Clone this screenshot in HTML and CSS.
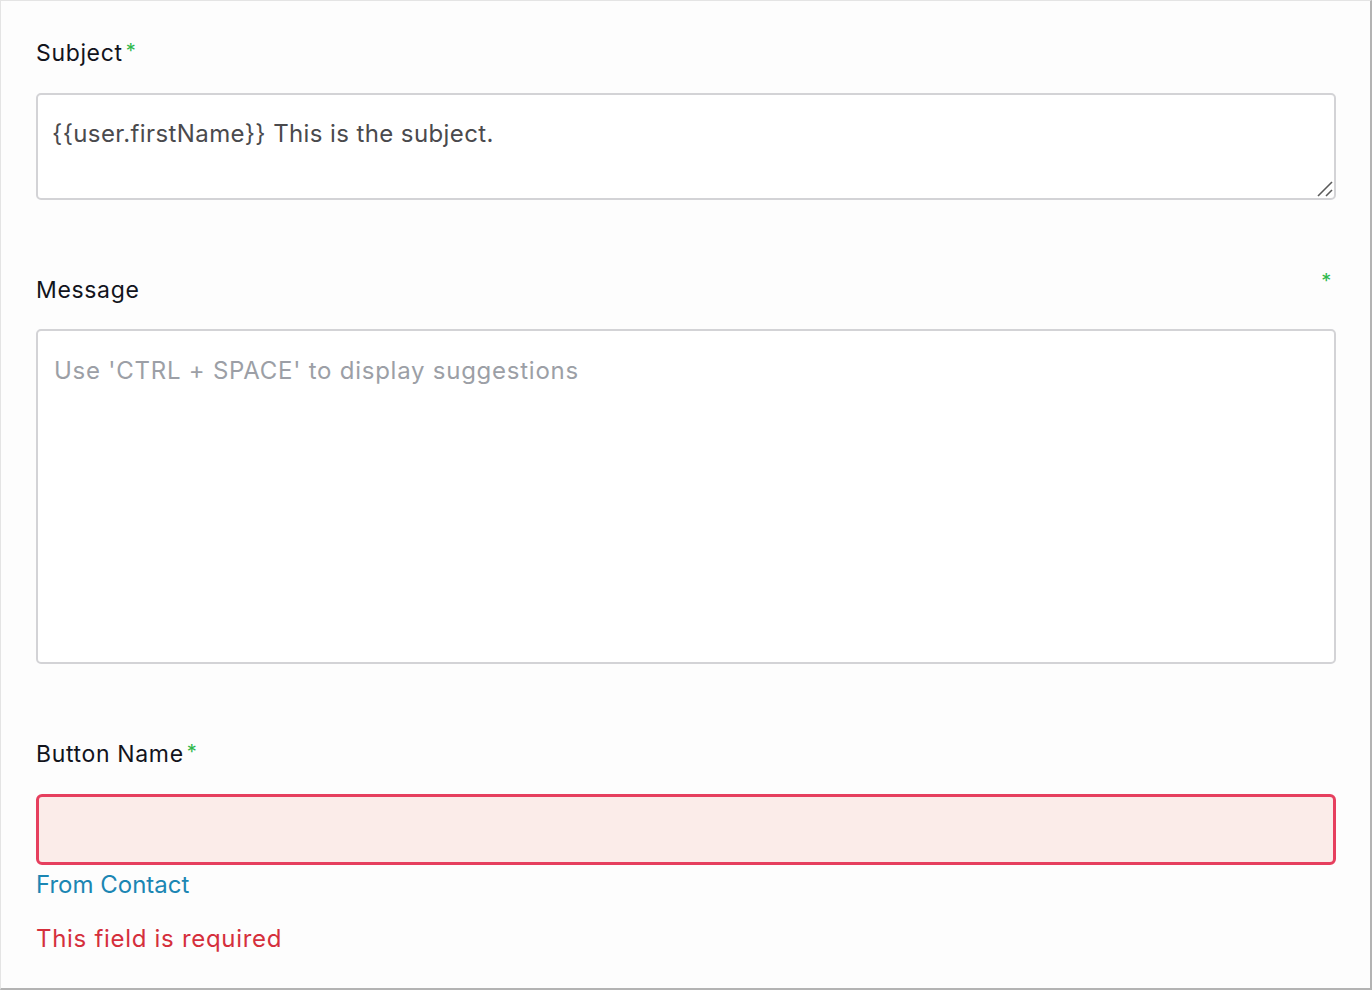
FILE: index.html
```html
<!DOCTYPE html>
<html lang="en">
<head>
<meta charset="utf-8">
<title>Form</title>
<link rel="stylesheet" href="styles.css">
</head>
<body>
<div class="frame">
  <div class="field field-subject">
    <label class="label"><span class="label-text">Subject</span><span class="req">*</span></label>
    <div class="subject-wrap">
      <textarea class="subject-input" readonly>{{user.firstName}} This is the subject.</textarea>
      <svg class="grip" width="16" height="16" viewBox="0 0 16 16" aria-hidden="true">
        <line x1="1" y1="15" x2="15" y2="1" stroke="#5a5a5a" stroke-width="1.6"/>
        <line x1="9" y1="15" x2="15" y2="9" stroke="#5a5a5a" stroke-width="1.6"/>
      </svg>
    </div>
  </div>
  <div class="field field-message">
    <label class="label label-spread"><span class="label-text">Message</span><span class="req">*</span></label>
    <textarea class="message-input" readonly placeholder="Use 'CTRL + SPACE' to display suggestions"></textarea>
  </div>
  <div class="field field-button">
    <label class="label"><span class="label-text">Button Name</span><span class="req">*</span></label>
    <input class="button-input" type="text" value="">
    <div class="from-contact">From Contact</div>
    <div class="error">This field is required</div>
  </div>
</div>
</body>
</html>
```

FILE: styles.css
```css
* { box-sizing: border-box; }
html, body { margin: 0; padding: 0; background: #fff; }
body { font-family: Inter, "Open Sans", "Liberation Sans", sans-serif; }

.frame {
  width: 1372px;
  height: 990px;
  border-top: 1px solid #e4e4e4;
  border-left: 1px solid #e4e4e4;
  border-right: 2px solid #b3b3b3;
  border-bottom: 2px solid #b3b3b3;
  padding: 37px 34px 0 35px;
  background: #fdfdfd;
}

.field { display: flex; flex-direction: column; }
.field-message, .field-button { margin-top: 75px; }

.label {
  display: flex;
  align-items: flex-start;
  height: 30px;
  line-height: 30px;
  font-size: 23px;
  font-weight: 400;
  letter-spacing: 0.65px;
  color: #12141c;
  margin-bottom: 25px;
}
.field-message .label { margin-bottom: 24px; }
.label-spread { justify-content: space-between; padding-right: 4px; }
.req {
  color: #2eb84b;
  font-size: 20px;
  font-weight: 400;
  line-height: 20px;
  margin-left: 3px;
  margin-top: 3px;
}
.label-spread .req { margin-top: -4px; }

.subject-wrap { position: relative; }
.grip {
  position: absolute;
  right: 3px;
  bottom: 3px;
}

.subject-input, .message-input {
  display: block;
  width: 100%;
  border: 2px solid #d3d3d6;
  border-radius: 5px;
  background: #fff;
  font-family: inherit;
  font-size: 24px;
  color: #4a4a4d;
  outline: none;
  margin: 0;
  resize: none;
}
.subject-input {
  height: 107px;
  padding: 24px 14px;
  line-height: 30px;
  letter-spacing: 0.4px;
}
.message-input {
  height: 335px;
  padding: 25px 16px;
  line-height: 30px;
}
.message-input::placeholder { color: #9c9fa6; opacity: 1; letter-spacing: 0.75px; }

.button-input {
  display: block;
  width: 100%;
  height: 71px;
  border: 3px solid #e63f5e;
  border-radius: 6px;
  background: #fbece9;
  outline: none;
  margin: 0;
  font-family: inherit;
  font-size: 24px;
}

.from-contact {
  margin-top: 5px;
  font-size: 24px;
  line-height: 30px;
  color: #1b86b3;
}
.error {
  margin-top: 24px;
  font-size: 24px;
  line-height: 30px;
  letter-spacing: 0.7px;
  color: #d52f3c;
}
```
